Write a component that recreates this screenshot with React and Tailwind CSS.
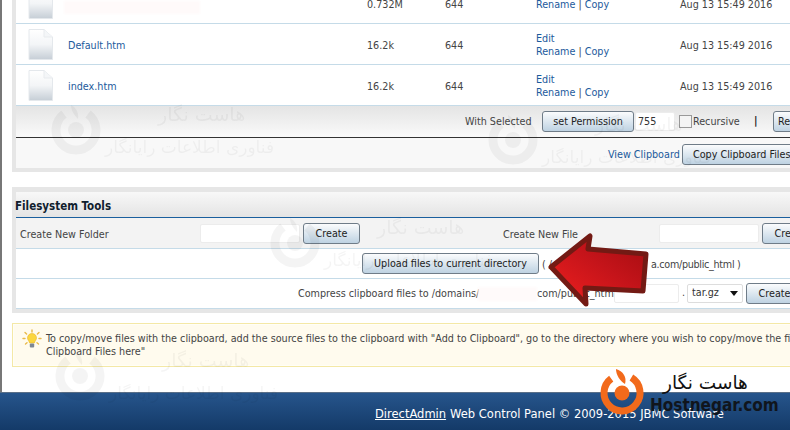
import React from "react";

const font = { fontFamily: '"DejaVu Sans Condensed", "DejaVu Sans", sans-serif' };

const files = [
  { name: null, size: "0.732M", edit: false, first: true },
  { name: "Default.htm", size: "16.2k", edit: true },
  { name: "index.htm", size: "16.2k", edit: true },
];

function FileIcon() {
  return (
    <svg width="26" height="31" viewBox="0 0 26 31" className="block">
      <defs>
        <linearGradient id="docFill" x1="0" y1="0" x2="0" y2="1">
          <stop offset="0" stopColor="#ffffff" />
          <stop offset="0.5" stopColor="#f3f5f7" />
          <stop offset="1" stopColor="#c6ced6" />
        </linearGradient>
      </defs>
      <path d="M1 0.5H16L24.5 8V30.5H1Z" fill="url(#docFill)" stroke="#e4e8ec" />
      <path d="M16 0.5V8H24.5" fill="#f4f6f8" stroke="#e8ebee" />
    </svg>
  );
}

function Btn({ children, className = "" }) {
  return (
    <button className={`shrink-0 whitespace-nowrap rounded-[3px] border border-[#6f7c88] bg-gradient-to-b from-[#fbfcfd] to-[#bed2e2] pt-[2px] text-[10.7px] leading-none text-[#222] ${className}`}>
      {children}
    </button>
  );
}

function Field({ className = "", value = "" }) {
  return (
    <input readOnly value={value} className={`shrink-0 rounded-[2px] border border-[#ececec] bg-white px-[2px] text-[10.7px] text-[#333] ${className}`} />
  );
}

function FileRow({ file }) {
  return (
    <div className={`grid h-[41px] grid-cols-[52px_299px_78px_91px_144px_1fr] items-center border-b border-[#c5dbe8] bg-white ${file.first ? "-mt-[17px]" : ""}`}>
      <div className="pl-[12px]"><FileIcon /></div>
      {file.name ? (
        <span className="pt-[4px] text-[#1c5a9c]">{file.name}</span>
      ) : (
        <div className="-ml-[4px] mt-[8px] h-[13px] w-[136px] bg-[#fffafa] blur-[1px]"></div>
      )}
      <span className="pt-[4px]">{file.size}</span>
      <span className="pt-[4px]">644</span>
      <div className="pt-[2px] leading-[13px] text-[#1c5a9c]">
        {file.edit && <div>Edit</div>}
        <div>Rename <span className="text-[#444]">|</span> Copy</div>
      </div>
      <span className="pt-[4px]">Aug 13 15:49 2016</span>
    </div>
  );
}

function Watermark({ x, y }) {
  return (
    <div className="pointer-events-none absolute opacity-[0.04]" style={{ left: x - 25, top: y - 25 }}>
      <svg width="50" height="50" viewBox="0 0 50 50" className="block">
        <path d="M13 9A20 20 0 1 0 37 9" fill="none" stroke="#000" strokeWidth="9" />
        <path d="M20 0C26 3 28 9 27 14C24 11 20 6 20 0Z" fill="#000" />
        <circle cx="25" cy="25" r="8" fill="#000" />
      </svg>
      <div dir="rtl" className="absolute left-[107px] top-[0px] whitespace-nowrap text-[19px] leading-none text-black" style={{ fontFamily: '"DejaVu Sans", sans-serif' }}>
        هاست نگار
      </div>
      <div dir="rtl" className="absolute left-[54px] top-[34px] whitespace-nowrap text-[17px] leading-none text-black" style={{ fontFamily: '"DejaVu Sans", sans-serif' }}>
        فناوری اطلاعات رایانگار
      </div>
    </div>
  );
}

function Bulb() {
  return (
    <svg width="20" height="20" viewBox="0 0 20 20" className="block">
      <g stroke="#e8b84a" strokeWidth="1.4" strokeLinecap="round">
        <path d="M10 1V3M3 3.5L4.6 5M17 3.5L15.4 5M1 9.5H3M17 9.5H19M3.5 15L5 13.8M16.5 15L15 13.8" />
      </g>
      <path d="M10 4.5C7.2 4.5 5.5 6.6 5.5 9C5.5 11 7.2 12 7.6 14H12.4C12.8 12 14.5 11 14.5 9C14.5 6.6 12.8 4.5 10 4.5Z" fill="#fbd63f" stroke="#eab52c" strokeWidth="0.6" />
      <rect x="7.8" y="14.4" width="4.4" height="4.2" rx="1" fill="#7d8794" />
    </svg>
  );
}

function Arrow() {
  return (
    <svg className="pointer-events-none absolute left-[540px] top-[225px]" width="115" height="90" viewBox="540 225 115 90">
      <defs>
        <linearGradient id="arrowFill" x1="0" y1="1" x2="1" y2="0">
          <stop offset="0" stopColor="#f0201f" />
          <stop offset="0.55" stopColor="#c5141a" />
          <stop offset="1" stopColor="#a20c10" />
        </linearGradient>
      </defs>
      <path d="M551 267L590 236L588 249L646 254L643 291L585 288L586 304Z" fill="url(#arrowFill)" stroke="#731a14" strokeWidth="5" strokeLinejoin="round" />
    </svg>
  );
}

function Logo() {
  return (
    <div className="pointer-events-none absolute left-[598px] top-[366px] h-[54px] w-[190px]">
      <svg width="50" height="54" viewBox="0 0 50 54" className="block">
        <path d="M13.2 12.6A18 18 0 1 0 33.4 11.6" fill="none" stroke="#f26a1b" strokeWidth="7" />
        <path d="M18 3C25 5 29 11 27 18C22 15 18 9 18 3Z" fill="#f26a1b" />
        <circle cx="24" cy="27" r="7.5" fill="#f26a1b" />
      </svg>
      <div dir="rtl" className="absolute left-[65px] top-[5px] whitespace-nowrap text-[18.5px] leading-[24px] text-[#111]" style={{ fontFamily: '"DejaVu Sans", sans-serif' }}>
        هاست نگار
      </div>
      <div className="absolute left-[52px] top-[28px] whitespace-nowrap text-[17px] font-bold leading-[22px] text-[#10151c]" style={{ fontFamily: '"DejaVu Sans Condensed", "DejaVu Sans", sans-serif' }}>
        Hostnegar.com
      </div>
    </div>
  );
}

export default function App() {
  return (
    <div className="relative h-[430px] w-[790px] overflow-hidden bg-white text-[10.7px] text-[#444]" style={font}>
      <div className="flow-root h-[392px] border-l-2 border-[#777] pl-[10px]">
        <div className="w-[1000px] border-b-[4px] border-l-[4px] border-[#e6e6e6]">
          {files.map((f, i) => (
            <FileRow key={i} file={f} />
          ))}
          <div className="flex h-[31px] items-center bg-gradient-to-b from-[#e4e4e4] to-[#fafafa] pl-[449px]">
            <span className="w-[77px] shrink-0 pt-[1px]">With Selected</span>
            <Btn className="h-[21px] w-[92px]">set Permission</Btn>
            <Field value="755" className="ml-[1px] h-[19px] w-[40px]" />
            <span className="ml-[4px] h-[13px] w-[13px] shrink-0 border border-[#999] bg-[#f4f4f4]"></span>
            <span className="ml-[1px] w-[61px] shrink-0 pt-[1px]">Recursive</span>
            <span className="w-[19px] shrink-0 font-bold text-[#222]">|</span>
            <Btn className="h-[21px] w-[90px] pl-[4px] text-left">Rename</Btn>
          </div>
          <div className="flex h-[31px] items-center border-t border-[#333] bg-[#f8f8f8] pl-[592px]">
            <span className="w-[74px] shrink-0 whitespace-nowrap pt-[4px] text-[#1c5a9c]">View Clipboard</span>
            <Btn className="mt-[3px] h-[21px] w-[130px] pl-[10px] text-left">Copy Clipboard Files</Btn>
          </div>
        </div>

        <div className="mt-[15px] w-[1000px] border-b-[4px] border-l-[4px] border-t-[5px] border-[#e6e6e6]">
          <div className="flex h-[26px] items-center border-b border-[#1a5f9e] bg-gradient-to-b from-[#f8f8f8] to-[#e4e4e4] pt-[4px] font-bold text-[#10202e]">
            <span className="-ml-[1px] text-[11.5px]">Filesystem Tools</span>
          </div>
          <div className="flex h-[31px] items-center border-b border-[#c5dbe8] bg-[#f3f3f3] pl-[4px]">
            <span className="w-[180px] shrink-0 pt-[4px]">Create New Folder</span>
            <Field className="h-[19px] w-[100px]" />
            <Btn className="ml-[3px] h-[21px] w-[57px]">Create</Btn>
            <span className="ml-[143px] w-[156px] shrink-0 pt-[4px]">Create New File</span>
            <Field className="h-[19px] w-[100px]" />
            <Btn className="ml-[3px] h-[21px] w-[57px]">Create</Btn>
          </div>
          <div className="flex h-[30px] items-center border-b border-[#c5dbe8] bg-white pl-[346px]">
            <Btn className="h-[21px] w-[177px]">Upload files to current directory</Btn>
            <span className="ml-[3px] w-[109px] shrink-0 pt-[4px]">( /</span>
            <span className="pt-[4px] tracking-[-0.3px]">a.com/public_html )</span>
          </div>
          <div className="flex h-[30px] items-center border-b border-[#c5dbe8] bg-white pl-[282px]">
            <span className="w-[180px] shrink-0 whitespace-nowrap pt-[2px]">Compress clipboard files to /domains/</span>
            <div className="h-[14px] w-[59px] shrink-0 bg-[#fffafa] blur-[1px]"></div>
            <span className="w-[77px] shrink-0 whitespace-nowrap pt-[2px]">com/public_html</span>
            <Field className="h-[19px] w-[65px]" />
            <span className="ml-[3px] w-[5px] shrink-0">.</span>
            <div className="flex h-[19px] w-[56px] shrink-0 items-center justify-between rounded-[2px] border border-[#ddd] bg-white pl-[4px] pr-[4px] text-[#333]">
              tar.gz
              <svg width="8" height="5" viewBox="0 0 8 5"><path d="M0 0H8L4 5Z" fill="#111" /></svg>
            </div>
            <Btn className="ml-[3px] h-[21px] w-[57px]">Create</Btn>
          </div>
        </div>

        <div className="mt-[10px] flex h-[44px] w-[1000px] items-start border border-[#f4e8a6] bg-[#fffbee] pl-[9px] pt-[8px] shadow-[inset_0_0_0_1px_#fffef6]">
          <div className="-mt-[3px] shrink-0"><Bulb /></div>
          <p className="ml-[4px] whitespace-nowrap leading-[13px] text-[#444]">
            To copy/move files with the clipboard, add the source files to the clipboard with "Add to Clipboard", go to the directory where you wish to copy/move the files to, and click "Copy
            <br />
            Clipboard Files here"
          </p>
        </div>
      </div>

      <div className="flex h-[38px] items-center border-t border-[#5a6f88] bg-gradient-to-b from-[#26558c] to-[#143a68] pl-[375px] pt-[7px] text-[11.5px] text-white" style={{ fontFamily: '"DejaVu Sans", sans-serif' }}>
        <span className="underline">DirectAdmin</span>
        <span className="ml-[4px]">Web Control Panel © 2009-2015 JBMC Software</span>
      </div>

      <Watermark x={76} y={130} />
      <Watermark x={513} y={140} />
      <Watermark x={295} y={243} />
      <Watermark x={80} y={376} />
      <Arrow />
      <Logo />
    </div>
  );
}
